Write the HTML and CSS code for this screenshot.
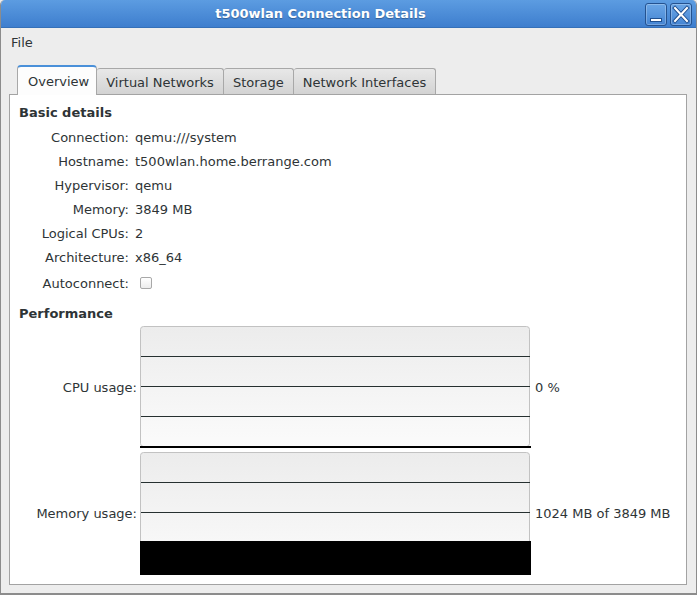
FILE: index.html
```html
<!DOCTYPE html>
<html>
<head>
<meta charset="utf-8">
<link rel="stylesheet" href="styles.css">
</head>
<body>
<div class="window">
  <div class="titlebar">
    <div class="title">t500wlan Connection Details</div>
    <div class="wbuttons">
      <div class="wbtn">
        <svg width="20" height="21" viewBox="0 0 20 21"><rect x="4.5" y="14.5" width="11" height="3" fill="#fff" stroke="#1f4f8f" stroke-width="1"/></svg>
      </div>
      <div class="wbtn">
        <svg width="20" height="21" viewBox="0 0 20 21"><path d="M4 4 L16 17 M16 4 L4 17" stroke="#1f4f8f" stroke-width="4" stroke-linecap="square"/><path d="M4 4 L16 17 M16 4 L4 17" stroke="#fff" stroke-width="2" stroke-linecap="square"/></svg>
      </div>
    </div>
  </div>
  <div class="menubar"><span class="menuitem">File</span></div>
  <div class="tabstrip">
    <div class="tab active">Overview</div>
    <div class="tab">Virtual Networks</div>
    <div class="tab">Storage</div>
    <div class="tab">Network Interfaces</div>
  </div>
  <div class="pane">
    <div class="heading">Basic details</div>
    <div class="details">
      <div class="lbl">Connection:</div><div class="val">qemu:///system</div>
      <div class="lbl">Hostname:</div><div class="val">t500wlan.home.berrange.com</div>
      <div class="lbl">Hypervisor:</div><div class="val">qemu</div>
      <div class="lbl">Memory:</div><div class="val">3849 MB</div>
      <div class="lbl">Logical CPUs:</div><div class="val">2</div>
      <div class="lbl">Architecture:</div><div class="val">x86_64</div>
      <div class="lbl">Autoconnect:</div><div class="val"><span class="check"></span></div>
    </div>
    <div class="heading perf">Performance</div>
    <div class="perfgrid">
      <div class="plbl">CPU usage:</div>
      <div class="graph">
        <svg width="391" height="123" viewBox="0 0 391 123">
          <defs>
            <linearGradient id="g1" x1="0" y1="0" x2="0" y2="1">
              <stop offset="0" stop-color="#ececec"/>
              <stop offset="1" stop-color="#fbfbfb"/>
            </linearGradient>
          </defs>
          <rect x="0.5" y="0.5" width="389" height="120" rx="3" fill="url(#g1)" stroke="#c2c2c2"/>
          <path d="M1 30.5 H390 M1 60.5 H390 M1 90.5 H390" stroke="#263030" stroke-width="1"/>
          <rect x="0" y="120" width="391" height="2" fill="#000"/>
        </svg>
      </div>
      <div class="pval">0 %</div>
      <div class="plbl">Memory usage:</div>
      <div class="graph">
        <svg width="391" height="123" viewBox="0 0 391 123">
          <defs>
            <linearGradient id="g2" x1="0" y1="0" x2="0" y2="1">
              <stop offset="0" stop-color="#ececec"/>
              <stop offset="1" stop-color="#fbfbfb"/>
            </linearGradient>
          </defs>
          <rect x="0.5" y="0.5" width="389" height="121" rx="3" fill="url(#g2)" stroke="#c2c2c2"/>
          <path d="M1 30.5 H390 M1 60.5 H390" stroke="#263030" stroke-width="1"/>
          <rect x="0" y="89" width="391" height="34" fill="#000"/>
        </svg>
      </div>
      <div class="pval">1024 MB of 3849 MB</div>
    </div>
  </div>
</div>
</body>
</html>
```

FILE: styles.css
```css
html, body {
  margin: 0;
  padding: 0;
  background: #ededed;
}
body {
  font-family: "DejaVu Sans", sans-serif;
  font-size: 13px;
  color: #2e3436;
}
.window {
  width: 697px;
  height: 595px;
  box-sizing: border-box;
  display: flex;
  flex-direction: column;
  background: #ededed;
  border-left: 1px solid #8c8c8c;
  border-right: 1px solid #8c8c8c;
  border-bottom: 2px solid #8c8c8c;
  border-radius: 5px 5px 0 0;
  overflow: hidden;
}
.titlebar {
  height: 28px;
  flex: none;
  display: flex;
  align-items: center;
  justify-content: center;
  background: linear-gradient(#5c9ce1, #3e7ece);
  border-bottom: 1px solid #3570b8;
  box-sizing: border-box;
  position: relative;
}
.title {
  color: #fff;
  font-weight: bold;
  font-size: 13px;
  text-shadow: 0 1px 1px rgba(0,0,0,0.3);
  margin-right: 56px;
}
.wbuttons {
  position: absolute;
  right: 4px;
  top: 3px;
  display: flex;
  gap: 3px;
}
.wbtn {
  width: 20px;
  height: 21px;
  border: 1px solid #24528f;
  border-radius: 3px;
  background: linear-gradient(#6aa6e6, #4585d3);
  box-shadow: inset 0 0 0 1px rgba(255,255,255,0.25);
  display: flex;
}
.menubar {
  height: 28px;
  flex: none;
  display: flex;
  align-items: center;
  padding-left: 10px;
}
.tabstrip {
  flex: none;
  height: 38px;
  box-sizing: border-box;
  display: flex;
  align-items: flex-end;
  padding-left: 16px;
  position: relative;
  z-index: 1;
}
.tab {
  height: 26px;
  box-sizing: border-box;
  padding: 1px 9px 0 9px;
  display: flex;
  align-items: center;
  border: 1px solid #a8a8a8;
  border-bottom: none;
  border-left: none;
  border-radius: 3px 3px 0 0;
  background: linear-gradient(#e8e8e8, #d3d3d3);
  color: #2e3436;
}
.tab.active {
  height: 30px;
  margin-bottom: -1px;
  padding: 0 7px 0 10px;
  border-left: 1px solid #a8a8a8;
  border-top: 2px solid #4a90d9;
  border-radius: 4px 4px 0 0;
  background: #fdfdfd;
}
.pane {
  flex: 1;
  margin: 0 9px 8px 8px;
  background: #fff;
  border: 1px solid #a3a3a3;
  padding: 6px 9px 0 9px;
}
.heading {
  font-weight: bold;
  height: 24px;
  line-height: 24px;
}
.heading.perf {
  margin-top: 5px;
}
.details {
  display: grid;
  grid-template-columns: 110px auto;
  grid-template-rows: repeat(6, 24px) 28px;
  column-gap: 6px;
  align-items: center;
}
.lbl {
  text-align: right;
}
.val {
  display: flex;
  align-items: center;
}
.check {
  display: inline-block;
  width: 10px;
  height: 10px;
  margin-left: 5px;
  border: 1px solid #a8a8a8;
  border-radius: 2px;
  background: linear-gradient(#ffffff, #ececec);
}
.perfgrid {
  display: grid;
  grid-template-columns: 121px 391px auto;
  grid-auto-rows: 123px;
  row-gap: 3px;
  align-items: center;
}
.plbl {
  text-align: right;
  padding-right: 3px;
}
.graph {
  display: flex;
  height: 123px;
}
.pval {
  padding-left: 4px;
}
```
